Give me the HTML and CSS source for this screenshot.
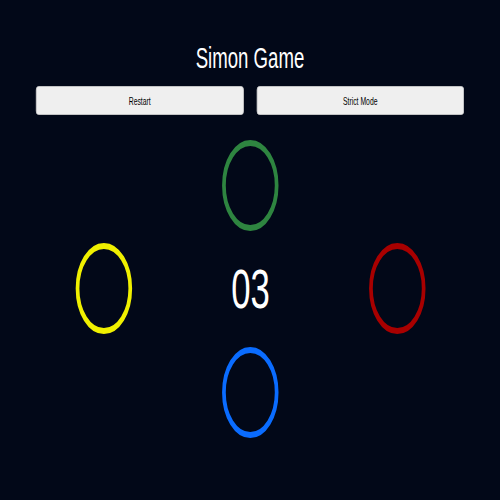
FILE: index.html
```html
<!DOCTYPE html>
<html>
<head>
<meta charset="utf-8">
<link rel="stylesheet" href="styles.css">
</head>
<body>
<div class="viewport">
  <div class="stage">
    <h1 class="title">Simon Game</h1>
    <div class="controls">
      <button class="btn">Restart</button>
      <button class="btn">Strict Mode</button>
    </div>
    <div class="board">
      <div class="pad pad-green"></div>
      <div class="middle">
        <div class="pad pad-yellow"></div>
        <div class="count">03</div>
        <div class="pad pad-red"></div>
      </div>
      <div class="pad pad-blue"></div>
    </div>
  </div>
</div>
</body>
</html>
```
FILE: styles.css
```css
html, body {
  margin: 0;
  padding: 0;
  background: #020818;
  overflow: hidden;
}
body {
  width: 500px;
  height: 500px;
  font-family: "Liberation Sans", Arial, sans-serif;
}
.viewport {
  width: 500px;
  height: 500px;
  overflow: hidden;
  position: relative;
}
.stage {
  width: 806px;
  transform: scaleX(0.6203);
  transform-origin: 0 0;
  padding-top: 41px;
}
.title {
  margin: 0;
  font-size: 30px;
  line-height: 34px;
  font-weight: normal;
  color: #ffffff;
  text-align: center;
}
.controls {
  display: grid;
  grid-template-columns: 1fr 1fr;
  column-gap: 21px;
  padding: 0 58px;
  margin-top: 11px;
}
.btn {
  height: 29px;
  margin: 0;
  padding: 0;
  background: #efefef;
  border: 1px solid #d4d4d4;
  border-radius: 4px;
  font-family: "Liberation Sans", Arial, sans-serif;
  font-size: 11px;
  color: #000000;
}
.board {
  display: flex;
  flex-direction: column;
  align-items: center;
  margin-top: 25px;
}
.pad {
  width: 91px;
  height: 91px;
  box-sizing: border-box;
  border-radius: 50%;
  border: 6px solid;
}
.pad-green { border-color: #2e8540; }
.pad-yellow { border-color: #f0f000; }
.pad-red { border-color: #a80000; }
.pad-blue { border-color: #0a6cff; }
.middle {
  width: 565px;
  display: flex;
  justify-content: space-between;
  align-items: center;
  margin: 12px 0 13px;
  padding-left: 2px;
}
.count {
  color: #ffffff;
  font-size: 56px;
  line-height: 91px;
}
```
